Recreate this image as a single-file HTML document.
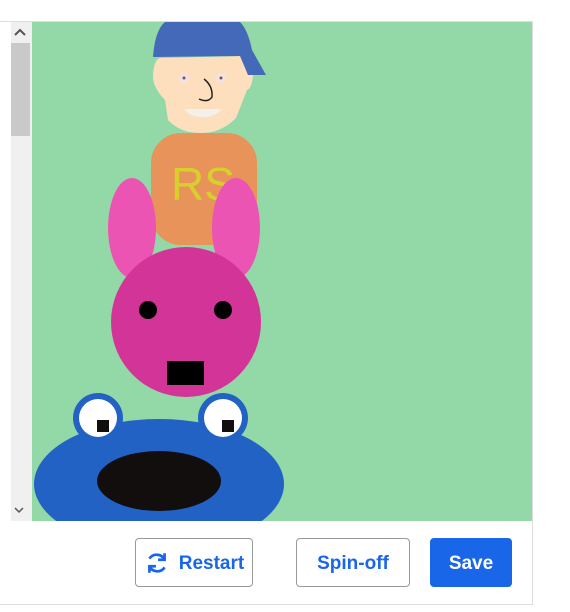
<!DOCTYPE html>
<html><head><style>
body{margin:0;width:570px;height:612px;background:#fff;position:relative;overflow:hidden;font-family:"Liberation Sans",sans-serif}
.btn{position:absolute;top:538px;height:49px;box-sizing:border-box;border:1px solid #999;border-radius:4px;background:#fff;color:#1a66e8;font-size:19px;font-weight:bold;display:flex;align-items:center;justify-content:center;padding-top:3px}
</style></head><body>
<div style="position:absolute;left:0;top:21px;width:533px;height:584px;border-top:1px solid #ddd;border-right:1px solid #ddd;border-bottom:1px solid #ddd;box-sizing:border-box"></div>
<div style="position:absolute;left:11px;top:22px;width:21px;height:499px;background:#f0f0f0"></div>
<div style="position:absolute;left:11px;top:43px;width:19px;height:93px;background:#c9c9c9"></div>
<svg width="570" height="612" style="position:absolute;left:0;top:0">
<polyline points="15,35 20,30 25,35" fill="none" stroke="#555" stroke-width="2"/>
<polyline points="15,508 19,512 23,508" fill="none" stroke="#555" stroke-width="1.5"/>
<clipPath id="c"><rect x="32" y="22" width="500" height="499"/></clipPath>
<g clip-path="url(#c)">
<rect x="32" y="22" width="500" height="499" fill="#93d8a7"/>
<path d="M153,79 Q153,60 160,58 L245,56 Q253,62 253,75 Q252,88 247,90 L236,118 Q220,134 200,133 Q180,133 168,120 L165,100 Q155,90 153,79Z" fill="#fddfbd"/>
<path d="M153,57 Q155,30 165,22 L240,22 Q248,30 252,50 L266,75 L248,75 L240,56 Z" fill="#4469b8"/>
<circle cx="184" cy="78" r="5" fill="#f1e3e3"/><circle cx="184" cy="78" r="1.5" fill="#755"/>
<circle cx="221" cy="78" r="5" fill="#f1e3e3"/><circle cx="221" cy="78" r="1.5" fill="#755"/>
<path d="M204,79 Q213,86 212,97 Q208,103 199,99" fill="none" stroke="#222" stroke-width="1.5"/>
<path d="M184,109 L222,109 Q214,118 202,117 Q190,117 184,109Z" fill="#f2f0e8"/>
<rect x="151" y="133" width="106" height="112" rx="30" fill="#e8935a"/>
<text x="171" y="200" font-size="46" fill="#d8cf2c">RS</text>
<ellipse cx="132" cy="228" rx="24" ry="50" fill="#ec54b3"/>
<ellipse cx="236" cy="228" rx="24" ry="50" fill="#ec54b3"/>
<circle cx="186" cy="322" r="75" fill="#d23597"/>
<circle cx="148" cy="310" r="9" fill="#000"/><circle cx="223" cy="310" r="9" fill="#000"/>
<rect x="167" y="361" width="37" height="24" fill="#000"/>
<ellipse cx="159" cy="484" rx="125" ry="65" fill="#2262c4"/>
<circle cx="98" cy="418" r="25" fill="#2262c4"/><circle cx="98" cy="418" r="19" fill="#fff"/>
<circle cx="223" cy="418" r="25" fill="#2262c4"/><circle cx="223" cy="418" r="19" fill="#fff"/>
<rect x="97" y="420" width="12" height="12" fill="#120e0e"/>
<rect x="222" y="420" width="12" height="12" fill="#120e0e"/>
<ellipse cx="159" cy="481" rx="62" ry="30" fill="#120e0e"/>
</g>
</svg>
<div class="btn" style="left:135px;width:118px"><svg width="26" height="26" viewBox="0 0 24 24" style="margin-right:9px;margin-top:-3px" fill="none" stroke="#1a66e8" stroke-width="2.5"><path d="M19,9 A8,8 0 0 0 5,8"/><path d="M5,15 A8,8 0 0 0 19,16"/><path d="M19,3 V9 H13" /><path d="M5,21 V15 H11"/></svg>Restart</div>
<div class="btn" style="left:296px;width:114px">Spin-off</div>
<div class="btn" style="left:430px;width:82px;background:#1a66e8;border-color:#1a66e8;color:#fff">Save</div>
</body></html>
